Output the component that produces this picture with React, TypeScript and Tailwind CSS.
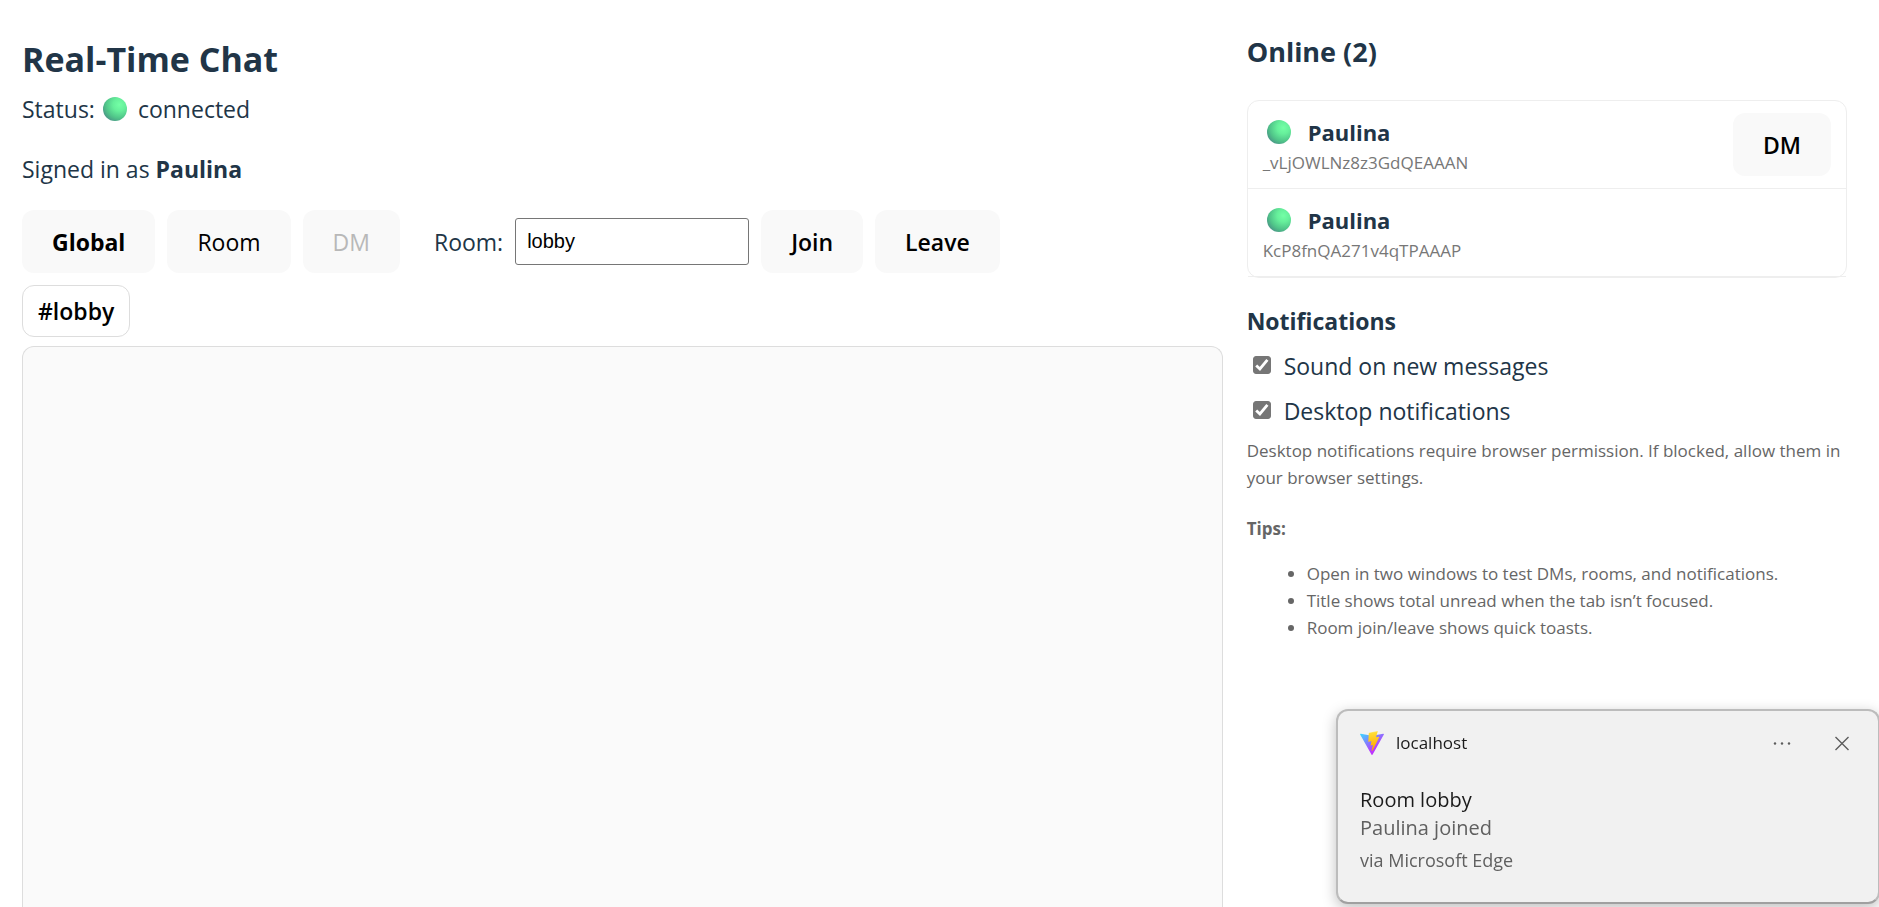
import React, { useId, useState } from "react";

const buttonBase =
  "h-[63px] rounded-xl bg-[#f9f9f9] px-[30px] text-[23px] text-black";

function OnlineDot({ className }: { className?: string }) {
  const id = useId();
  return (
    <svg viewBox="0 0 24 24" className={`size-6 shrink-0 ${className ?? ""}`} aria-hidden="true">
      <defs>
        <radialGradient id={`${id}g`} cx="0.68" cy="0.32" r="0.75">
          <stop offset="0" stopColor="#74ffa6" />
          <stop offset="0.35" stopColor="#66ef9b" />
          <stop offset="0.75" stopColor="#50c489" />
          <stop offset="1" stopColor="#4a9a86" />
        </radialGradient>
      </defs>
      <circle cx="12" cy="12" r="12" fill={`url(#${id}g)`} />
    </svg>
  );
}

function ViteLogo() {
  return (
    <svg viewBox="0 0 256 257" className="size-6" aria-hidden="true">
      <defs>
        <linearGradient id="viteBody" x1="-0.828%" x2="57.636%" y1="7.652%" y2="78.411%">
          <stop offset="0%" stopColor="#41D1FF" />
          <stop offset="100%" stopColor="#BD34FE" />
        </linearGradient>
        <linearGradient id="viteBolt" x1="43.376%" x2="50.316%" y1="2.242%" y2="89.03%">
          <stop offset="0%" stopColor="#FFEA83" />
          <stop offset="8.333%" stopColor="#FFDD35" />
          <stop offset="100%" stopColor="#FFA800" />
        </linearGradient>
      </defs>
      <path
        fill="url(#viteBody)"
        d="M255.153 37.938L134.897 252.976c-2.483 4.44-8.862 4.466-11.382.048L.875 37.958c-2.746-4.814 1.371-10.646 6.827-9.67l120.385 21.517a6.537 6.537 0 0 0 2.322-.004l117.867-21.483c5.438-.991 9.574 4.796 6.877 9.62Z"
      />
      <path
        fill="url(#viteBolt)"
        d="M185.432.063L96.44 17.501a3.268 3.268 0 0 0-2.634 3.014l-5.474 92.456a3.268 3.268 0 0 0 3.997 3.378l24.777-5.718c2.318-.535 4.413 1.507 3.936 3.838l-7.361 36.047c-.495 2.426 1.782 4.5 4.151 3.78l15.304-4.649c2.372-.72 4.652 1.36 4.15 3.788l-11.698 56.621c-.732 3.542 3.979 5.473 5.943 2.437l1.313-2.028l72.516-144.72c1.215-2.423-.88-5.186-3.54-4.672l-25.505 4.922c-2.396.462-4.435-1.77-3.759-4.114l16.646-57.705c.677-2.35-1.37-4.583-3.769-4.113Z"
      />
    </svg>
  );
}

function UserRow({ name, id, canMessage }: { name: string; id: string; canMessage?: boolean }) {
  return (
    <li className="flex items-center justify-between border-b border-[#eee] px-[15px] py-3">
      <div className="pb-0.5">
        <div className="flex h-[38px] items-center gap-[17px] pl-1">
          <OnlineDot />
          <span className="text-[22px] font-bold">{name}</span>
        </div>
        <div className="text-[17px] leading-[23px] text-[#777]">{id}</div>
      </div>
      {canMessage && <button className={`${buttonBase} font-semibold`}>DM</button>}
    </li>
  );
}

function Toggle({ id, label }: { id: string; label: string }) {
  const [on, setOn] = useState(true);
  return (
    <div className="flex h-9 items-center">
      <span className="relative mb-1 ml-1.5 block size-[18px]">
        <input
          id={id}
          type="checkbox"
          checked={on}
          onChange={(e) => setOn(e.target.checked)}
          className="peer block size-[18px] appearance-none rounded-[3px] border border-[#767676] checked:bg-[#767676]"
        />
        <svg
          viewBox="0 0 18 18"
          className="pointer-events-none absolute inset-0 hidden size-[18px] peer-checked:block"
          fill="none"
          stroke="#fff"
          strokeWidth="2.8"
          aria-hidden="true"
        >
          <path d="M3.2 9.4 6.9 13 14.4 3.8" />
        </svg>
      </span>
      <label htmlFor={id} className="pb-0.5 pl-[13px] text-[23px] leading-[34px]">
        {label}
      </label>
    </div>
  );
}

function Toast() {
  return (
    <aside
      role="status"
      className="fixed -right-px bottom-[3px] h-[195px] w-[544px] rounded-xl border-2 border-[#bcbcbc] border-b-[#a0a0a0] bg-[#f1f1f1] pt-5 pr-6 pl-[22px] shadow-[0_4px_14px_rgba(0,0,0,0.25)]"
    >
      <div className="flex h-6 items-center">
        <ViteLogo />
        <span className="pl-3 text-[17px] leading-6 text-[#1b1b1b]">localhost</span>
        <button aria-label="More options" className="mr-9 ml-auto flex size-6 items-center justify-center">
          <svg viewBox="0 0 24 24" className="size-6" fill="#5c5c5c" aria-hidden="true">
            <circle cx="5" cy="12.5" r="1.2" />
            <circle cx="12" cy="12.5" r="1.2" />
            <circle cx="19" cy="12.5" r="1.2" />
          </svg>
        </button>
        <button aria-label="Close" className="flex size-6 items-center justify-center">
          <svg viewBox="0 0 24 24" className="size-6" fill="none" stroke="#5c5c5c" strokeWidth="1.4" aria-hidden="true">
            <path d="M5.5 6 18.5 19M18.5 6 5.5 19" />
          </svg>
        </button>
      </div>
      <p className="mt-[31px] text-[20px] leading-7 text-[#1b1b1b]">Room lobby</p>
      <p className="text-[20px] leading-7 text-[#606060]">Paulina joined</p>
      <p className="mt-1 text-[18px] leading-7 text-[#606060]">via Microsoft Edge</p>
    </aside>
  );
}

export default function App() {
  const [room, setRoom] = useState("lobby");
  return (
    <div className="grid h-screen grid-cols-[2fr_1fr] gap-6 overflow-hidden bg-white pr-8 pl-[22px] font-['Open_Sans',sans-serif] text-[23px] leading-9 text-[#213547]">
      <main className="flex min-w-0 flex-col pt-8">
        <h1 className="text-[34px] leading-[54px] font-bold">Real-Time Chat</h1>
        <p className="mt-[5px] flex h-9 items-center">
          Status:
          <OnlineDot className="mr-[11px] ml-2" />
          connected
        </p>
        <p className="mt-6">
          Signed in as <strong>Paulina</strong>
        </p>
        <div className="mt-[23px] flex items-center gap-3">
          <button className={`${buttonBase} font-bold`}>Global</button>
          <button className={buttonBase}>Room</button>
          <button disabled className="h-[63px] rounded-xl bg-[#f9f9f9] px-[30px] text-[23px] text-[#b8b8b8]">
            DM
          </button>
          <label htmlFor="room" className="ml-[22px]">
            Room:
          </label>
          <input
            id="room"
            value={room}
            onChange={(e) => setRoom(e.target.value)}
            className="h-[47px] w-[234px] rounded-[3px] border border-[#767676] bg-white px-[11px] font-['Liberation_Sans',sans-serif] text-[20px] text-black"
          />
          <button className={`${buttonBase} font-semibold`}>Join</button>
          <button className={`${buttonBase} font-semibold`}>Leave</button>
        </div>
        <div className="mt-3">
          <button className="block h-[52px] rounded-xl border border-[#ddd] bg-white px-[15px] text-[23px] font-semibold text-black">
            #lobby
          </button>
        </div>
        <section
          aria-label="Messages"
          className="mt-[9px] flex-1 rounded-t-xl border border-b-0 border-[#ddd] bg-[#fafafa]"
        />
      </main>

      <div className="min-w-0 pt-[34px]">
        <h2 className="text-[27px] leading-9 font-bold">Online (2)</h2>
        <ul className="mt-[30px] rounded-xl border border-[#eee]">
          <UserRow name="Paulina" id="_vLjOWLNz8z3GdQEAAAN" canMessage />
          <UserRow name="Paulina" id="KcP8fnQA271v4qTPAAAP" />
        </ul>
        <h3 className="mt-[25px] font-bold">Notifications</h3>
        <div className="mt-[10px] flex flex-col gap-[9px]">
          <Toggle id="sound" label="Sound on new messages" />
          <Toggle id="desktop" label="Desktop notifications" />
        </div>
        <div className="mt-[7px] text-[17px] leading-[27px] text-[#666]">
          <p>
            Desktop notifications require browser permission. If blocked, allow them in your browser
            settings.
          </p>
          <p className="mt-6 font-bold">Tips:</p>
          <ul className="mt-[18px] list-disc pl-[60px]">
            <li>Open in two windows to test DMs, rooms, and notifications.</li>
            <li>Title shows total unread when the tab isn’t focused.</li>
            <li>Room join/leave shows quick toasts.</li>
          </ul>
        </div>
      </div>
      <Toast />
    </div>
  );
}
